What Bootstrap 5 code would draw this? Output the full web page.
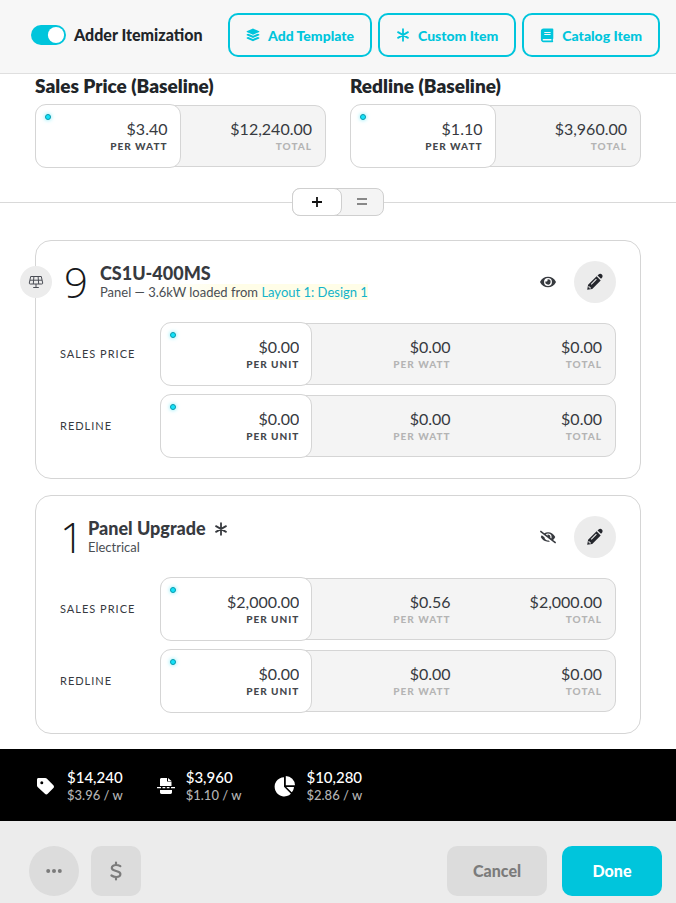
<!DOCTYPE html>
<html lang="en">
<head>
<meta charset="utf-8">
<meta name="viewport" content="width=device-width, initial-scale=1">
<title>Adder Itemization</title>
<link href="https://cdn.jsdelivr.net/npm/bootstrap@5.3.0/dist/css/bootstrap.min.css" rel="stylesheet">
<style>
  :root { --accent: #00c5dc; --ink: #373a3f; --line: #d5d5d5; --soft: #f4f4f4; }
  body { font-family: Lato, "Liberation Sans", sans-serif; font-size: 16px; line-height: 20px; color: var(--ink); background: #fff; }
  svg { display: block; fill: currentColor; flex: none; }
  svg.outline { fill: none; stroke: currentColor; }
  button svg { margin: auto; }

  .topbar { background: #f7f7f7; border-bottom: 1px solid #dfdfdf; padding: 13px 16px 16px 31px; }
  .topbar-actions { gap: 6px; }
  .adder-switch { min-height: 0; padding: 0; margin: 0; color: #212529; }
  .adder-switch .form-check-input { float: none; margin: 0; width: 35px; height: 20px; border: 0; }
  .adder-switch .form-check-input:checked { background-color: var(--accent); background-size: 18px 18px; background-position: right 1px center;
    background-image: url("data:image/svg+xml,%3csvg xmlns='http://www.w3.org/2000/svg' viewBox='-4 -4 8 8'%3e%3ccircle r='3.6' fill='%23fff'/%3e%3c/svg%3e"); }
  .adder-switch label { font-size: 16px; font-weight: 900; white-space: nowrap; }
  .btn-adder { height: 44px; padding: 0 16px; border: 2px solid var(--accent); border-radius: 10px; color: var(--accent);
    background: transparent; font-size: 14px; font-weight: 900; white-space: nowrap; }
  .btn-adder:hover { background: var(--accent); color: #fff; }

  .baseline { padding: 1px 35px 0; column-gap: 24px; }
  .baseline h2 { font-size: 19px; line-height: 22px; font-weight: 800; color: #212529; margin: 0 0 8px; }

  .price-group { border: 1px solid var(--line); border-radius: 11px; background: var(--soft); }
  .price-cell { flex: 1 1 0; min-width: 0; padding: 13px; text-align: right; line-height: 20px; }
  .price-cell .unit { display: block; font-size: 10px; line-height: 14px; font-weight: 900; letter-spacing: 1px; color: #b4b4b4; }
  .price-edit { position: relative; margin: -2px 0 -2px -1px; padding: 14px 12px 14px 13px; border: 1px solid var(--line); border-radius: 11px; background: #fff; }
  .price-edit .unit { color: #45484c; }
  .price-edit input { display: block; width: 100%; height: 20px; padding: 0; border: 0; outline: 0; background: transparent; text-align: right; color: inherit; }
  .price-edit::before { content: ""; position: absolute; left: 9px; top: 9px; width: 6px; height: 6px; border-radius: 50%;
    background: #13e2fa; border: 1px solid #0899ab; box-shadow: 0 0 4px #6fe7f5; }

  .mode-row { margin-top: 21px; }
  .mode-row hr { flex: 1; margin: 0; border-color: #d9d9d9; opacity: 1; }
  .mode-switch { width: 92px; border: 1px solid #cfcfcf; border-radius: 8px; background: var(--soft); }
  .mode-switch button { flex: 1; height: 26px; padding: 0; border: 0; background: transparent; color: #888; }
  .mode-switch .current { flex: 0 0 50px; height: 28px; margin: -1px; border: 1px solid #cfcfcf; border-radius: 8px; background: #fff; color: #111; }

  .item-list { padding: 24px 35px 15px; gap: 16px; }
  .item-card { position: relative; border: 1px solid var(--line); border-radius: 16px; padding: 20px 24px 21px; }
  .item-badge { position: absolute; left: -16px; top: 25px; width: 32px; height: 32px; border-radius: 50%; background: #ececec; color: #4a4d55; }
  .item-count { font-family: "Open Sans", Lato, sans-serif; font-size: 42px; line-height: 42px; font-weight: 300; color: #16181b; }
  .item-head h3 { font-size: 18px; line-height: 21px; font-weight: 900; margin: 0; }
  .item-head p { font-size: 13px; line-height: 17px; margin: 0; color: #4a4e53; }
  .item-head a { color: #12b3c9; text-decoration: none; }
  .loaded-from { background: linear-gradient(90deg, #fffde700, #fffde7 40%); }
  .item-tools { gap: 18px; }
  .btn-eye { padding: 0; border: 0; background: transparent; color: var(--ink); }
  .btn-edit { width: 42px; height: 42px; padding: 0; border: 0; border-radius: 50%; background: #ececec; color: #24262c; }
  .item-prices { margin-top: 20px; row-gap: 10px; }
  .row-name { width: 100px; flex: none; font-size: 11px; letter-spacing: 1px; }

  .totals { background: #000; color: #fff; padding: 19px 35px 17px; gap: 33px; font-size: 15px; font-weight: 500; line-height: 18px; }
  .total-entry { gap: 10px; }
  .totals .rate { display: block; font-size: 13px; color: #b3b3b3; }
  .actions { background: #ececec; padding: 25px 14px 7px 29px; }
  .actions > div { gap: 12px; }
  .actions button { height: 50px; padding: 0; border: 0; border-radius: 10px; background: #dcdcdc; color: #7b7b7b; font-size: 16px; font-weight: 900; }
  .actions .tool { width: 50px; }
  .actions .choices { gap: 15px; }
  .actions .wide { width: 100px; }
  .actions .done { background: var(--accent); color: #fff; }
</style>
</head>
<body>
<svg class="d-none" aria-hidden="true">
  <symbol id="i-star" viewBox="0 0 14 14"><path d="M7 1.200v11.600M2 4.100l10 5.800M12 4.100L2 9.900" fill="none" stroke="currentColor" stroke-width="1.800" stroke-linecap="round"/></symbol>
  <symbol id="i-pencil" viewBox="0 0 18 18"><path d="M1.200 16.800l.9-5L10.600 3.300l4.100 4.100-8.500 8.500zM11.500 2.400l1.100-1c1-.9 2.500-.8 3.300.1.900.9.9 2.200.1 3.200l-1 1.100z"/><path d="M5.200 11.400l5.200-5.200" stroke="#ececec" stroke-width="1.100" fill="none"/><path d="M2.900 13l.3 1.800 1.800.2" stroke="#ececec" stroke-width="1" fill="none"/></symbol>
  <symbol id="i-eye" viewBox="0 0 576 512"><path d="M572.500 241.400C518.300 135.600 410.900 64 288 64S57.700 135.600 3.500 241.400a32.400 32.400 0 0 0 0 29.200C57.700 376.400 165.100 448 288 448s230.300-71.600 284.500-177.400a32.400 32.400 0 0 0 0-29.200zM288 400a144 144 0 1 1 144-144 143.900 143.900 0 0 1-144 144zm0-240a95.300 95.300 0 0 0-25.300 3.800 47.900 47.900 0 0 1-66.900 66.900A95.800 95.800 0 1 0 288 160z"/></symbol>
  <symbol id="i-eye-off" viewBox="0 0 640 512"><path d="M320 400c-75.900 0-137.300-58.700-142.900-133.100L72.200 185.800c-13.800 17.300-26.500 35.600-36.700 55.600a32.400 32.400 0 0 0 0 29.200C89.700 376.400 197.100 448 320 448c26.900 0 52.900-4 77.900-10.500L346 397.400a144.100 144.100 0 0 1-26 2.600zm313.800 58.100l-110.600-85.400a331.300 331.300 0 0 0 81.300-102.100 32.400 32.400 0 0 0 0-29.200C550.300 135.600 442.900 64 320 64a308.200 308.200 0 0 0-147.300 37.700L45.500 3.400A16 16 0 0 0 23 6.200L3.400 31.500A16 16 0 0 0 6.200 53.900l588.400 454.700a16 16 0 0 0 22.400-2.800l19.700-25.300a16 16 0 0 0-2.900-22.400zM450.200 317.500l-39.300-30.400a94.800 94.800 0 0 0-116.200-122.100 47.700 47.700 0 0 1 9.300 28 46.600 46.600 0 0 1-1.500 10.100l-73.600-56.900A142.300 142.300 0 0 1 320 112a143.900 143.900 0 0 1 144 144c0 21.600-5.300 41.800-13.800 61.500z"/></symbol>
</svg>

<div class="min-vh-100 d-flex flex-column">
  <header class="topbar d-flex align-items-center justify-content-between">
    <div class="adder-switch form-check form-switch d-flex align-items-center gap-2">
      <input class="form-check-input" type="checkbox" role="switch" id="adder" checked>
      <label for="adder">Adder Itemization</label>
    </div>
    <div class="topbar-actions d-flex">
      <button type="button" class="btn btn-adder d-flex align-items-center gap-2">
        <svg width="14" height="14" viewBox="0 0 14 14"><path d="M7 .6l6.300 2.700v.8L7 6.800.7 4.100v-.8z"/><path d="M.7 6.300l1.600-.6L7 7.700l4.700-2 1.600.6v.9L7 9.900.7 7.200zM.7 9.500l1.600-.6L7 10.900l4.700-2 1.600.6v.9L7 13.200.7 10.400z"/></svg>
        Add Template
      </button>
      <button type="button" class="btn btn-adder d-flex align-items-center gap-2">
        <svg width="14" height="14"><use href="#i-star"/></svg>
        Custom Item
      </button>
      <button type="button" class="btn btn-adder d-flex align-items-center gap-2">
        <svg width="14" height="15" viewBox="0 0 14 15"><path fill-rule="evenodd" d="M3.500.5h9c.5 0 .8.300.8.800v8.900c0 .3-.1.500-.4.700-.1.500-.1 1.400 0 1.900.6.400.4 1.400-.4 1.400h-9C2 14.200.9 13.100.9 11.600V3.100C.9 1.600 2 .5 3.500.5zM4.300 4v.9h6.300V4zm0 2.100V7h6.300v-.9zM3.500 10.900c-1.100 0-1.100 1.700 0 1.700h7.900v-1.700z"/></svg>
        Catalog Item
      </button>
    </div>
  </header>

  <main class="flex-grow-1">
    <section class="baseline d-flex">
      <div class="flex-fill w-50">
        <h2>Sales Price (Baseline)</h2>
        <div class="price-group d-flex">
          <label class="price-cell price-edit"><input type="text" value="$3.40"><span class="unit">PER WATT</span></label>
          <div class="price-cell">$12,240.00<span class="unit">TOTAL</span></div>
        </div>
      </div>
      <div class="flex-fill w-50">
        <h2>Redline (Baseline)</h2>
        <div class="price-group d-flex">
          <label class="price-cell price-edit"><input type="text" value="$1.10"><span class="unit">PER WATT</span></label>
          <div class="price-cell">$3,960.00<span class="unit">TOTAL</span></div>
        </div>
      </div>
    </section>

    <div class="mode-row d-flex align-items-center">
      <hr>
      <div class="mode-switch d-flex" role="group" aria-label="Adder mode">
        <button type="button" class="current" aria-label="Add" aria-pressed="true"><svg class="outline" width="12" height="12" viewBox="0 0 12 12" stroke-width="1.8"><path d="M6 1v10M1 6h10"/></svg></button>
        <button type="button" aria-label="Equals" aria-pressed="false"><svg class="outline" width="12" height="12" viewBox="0 0 12 12" stroke-width="2"><path d="M1 3h10M1 8h10"/></svg></button>
      </div>
      <hr>
    </div>

    <section class="item-list d-flex flex-column">
      <article class="item-card">
        <span class="item-badge d-flex align-items-center justify-content-center">
          <svg class="outline" width="16" height="14" viewBox="0 0 16 14" stroke-width="1"><path d="M2.700 1.500h10.600l1.400 6.500q.1 1-.9 1H2.200q-1 0-.9-1zM2 5.200h12M5.900 1.500L5.300 9M10.100 1.500l.6 7.500M8 9v3.500M5.200 12.500h5.600"/></svg>
        </span>
        <div class="item-head d-flex align-items-center">
          <span class="item-count px-1">9</span>
          <div class="ms-2 me-auto">
            <h3>CS1U-400MS</h3>
            <p>Panel — <span class="loaded-from">3.6kW loaded from <a href="#">Layout 1: Design 1</a></span></p>
          </div>
          <div class="item-tools d-flex align-items-center">
            <button type="button" class="btn-eye" aria-label="Hide item"><svg width="16" height="14"><use href="#i-eye"/></svg></button>
            <button type="button" class="btn-edit" aria-label="Edit item"><svg width="18" height="18"><use href="#i-pencil"/></svg></button>
          </div>
        </div>
        <div class="item-prices d-flex flex-column">
          <div class="d-flex align-items-center">
            <span class="row-name">SALES PRICE</span>
            <div class="price-group d-flex flex-fill">
              <label class="price-cell price-edit"><input type="text" value="$0.00"><span class="unit">PER UNIT</span></label>
              <div class="price-cell">$0.00<span class="unit">PER WATT</span></div>
              <div class="price-cell">$0.00<span class="unit">TOTAL</span></div>
            </div>
          </div>
          <div class="d-flex align-items-center">
            <span class="row-name">REDLINE</span>
            <div class="price-group d-flex flex-fill">
              <label class="price-cell price-edit"><input type="text" value="$0.00"><span class="unit">PER UNIT</span></label>
              <div class="price-cell">$0.00<span class="unit">PER WATT</span></div>
              <div class="price-cell">$0.00<span class="unit">TOTAL</span></div>
            </div>
          </div>
        </div>
      </article>

      <article class="item-card">
        <div class="item-head d-flex align-items-center">
          <span class="item-count">1</span>
          <div class="ms-1 me-auto">
            <h3 class="d-flex align-items-center gap-2">Panel Upgrade <svg width="14" height="14"><use href="#i-star"/></svg></h3>
            <p>Electrical</p>
          </div>
          <div class="item-tools d-flex align-items-center">
            <button type="button" class="btn-eye" aria-label="Show item"><svg width="16" height="14"><use href="#i-eye-off"/></svg></button>
            <button type="button" class="btn-edit" aria-label="Edit item"><svg width="18" height="18"><use href="#i-pencil"/></svg></button>
          </div>
        </div>
        <div class="item-prices d-flex flex-column">
          <div class="d-flex align-items-center">
            <span class="row-name">SALES PRICE</span>
            <div class="price-group d-flex flex-fill">
              <label class="price-cell price-edit"><input type="text" value="$2,000.00"><span class="unit">PER UNIT</span></label>
              <div class="price-cell">$0.56<span class="unit">PER WATT</span></div>
              <div class="price-cell">$2,000.00<span class="unit">TOTAL</span></div>
            </div>
          </div>
          <div class="d-flex align-items-center">
            <span class="row-name">REDLINE</span>
            <div class="price-group d-flex flex-fill">
              <label class="price-cell price-edit"><input type="text" value="$0.00"><span class="unit">PER UNIT</span></label>
              <div class="price-cell">$0.00<span class="unit">PER WATT</span></div>
              <div class="price-cell">$0.00<span class="unit">TOTAL</span></div>
            </div>
          </div>
        </div>
      </article>
    </section>
  </main>

  <footer>
    <div class="totals d-flex flex-wrap">
      <div class="total-entry d-flex align-items-center">
        <svg width="22" height="22" viewBox="0 0 22 22"><path fill-rule="evenodd" d="M2 4.500C2 3.600 2.600 3 3.500 3h6.700c.6 0 1.100.2 1.500.6l6.700 6.700c.8.800.8 2 0 2.800l-5.700 5.700c-.8.800-2 .8-2.800 0l-7.300-6.700C2.200 11.700 2 11.200 2 10.600zm4.800 1.700a1.500 1.500 0 1 0 0 3 1.500 1.500 0 0 0 0-3z"/></svg>
        <div>$14,240<span class="rate">$3.96 / w</span></div>
      </div>
      <div class="total-entry d-flex align-items-center">
        <svg width="20" height="20" viewBox="0 0 20 20"><path d="M4 10V3.500C4 2.600 4.600 2 5.500 2H11v3.500h4.500V10zM12 2l3.500 3H12zM1 11h4v1.300H1zM6.500 11h2.800v1.300H6.500zM10.800 11h2.700v1.300h-2.700zM15 11h4v1.300h-4zM4 14h12v2.300c0 .9-.6 1.700-1.500 1.700h-9c-.9 0-1.500-.8-1.500-1.700z"/></svg>
        <div>$3,960<span class="rate">$1.10 / w</span></div>
      </div>
      <div class="total-entry d-flex align-items-center">
        <svg width="22" height="22" viewBox="0 0 22 22"><path d="M10 2.200v9.600l6.900 6.900A9.600 9.600 0 1 1 10 2.200zM11.800 1A9.500 9.500 0 0 1 21 10.300h-9.200zM12.300 12H20c-.2 2.200-1 3.800-2.300 5.300z"/></svg>
        <div>$10,280<span class="rate">$2.86 / w</span></div>
      </div>
    </div>
    <div class="actions d-flex align-items-center justify-content-between">
      <div class="d-flex">
        <button type="button" class="tool rounded-circle" aria-label="More"><svg width="16" height="6" viewBox="0 0 16 6"><circle cx="2.200" cy="3" r="2"/><circle cx="8" cy="3" r="2"/><circle cx="13.800" cy="3" r="2"/></svg></button>
        <button type="button" class="tool" aria-label="Pricing"><svg class="outline" width="12" height="20" viewBox="0 0 12 20" stroke-width="2.2" stroke-linecap="round"><path d="M6 1.500V4M6 16v2.500M10.300 5.200C8.800 4.200 7.300 4 6 4 3.500 4 1.800 5.200 1.800 7c0 4 8.600 2 8.600 6 0 1.900-1.800 3-4.200 3-1.700 0-3.300-.5-4.700-1.500"/></svg></button>
      </div>
      <div class="choices d-flex">
        <button type="button" class="wide">Cancel</button>
        <button type="button" class="wide done">Done</button>
      </div>
    </div>
  </footer>
</div>
<script src="https://cdn.jsdelivr.net/npm/bootstrap@5.3.0/dist/js/bootstrap.bundle.min.js"></script>
</body>
</html>
